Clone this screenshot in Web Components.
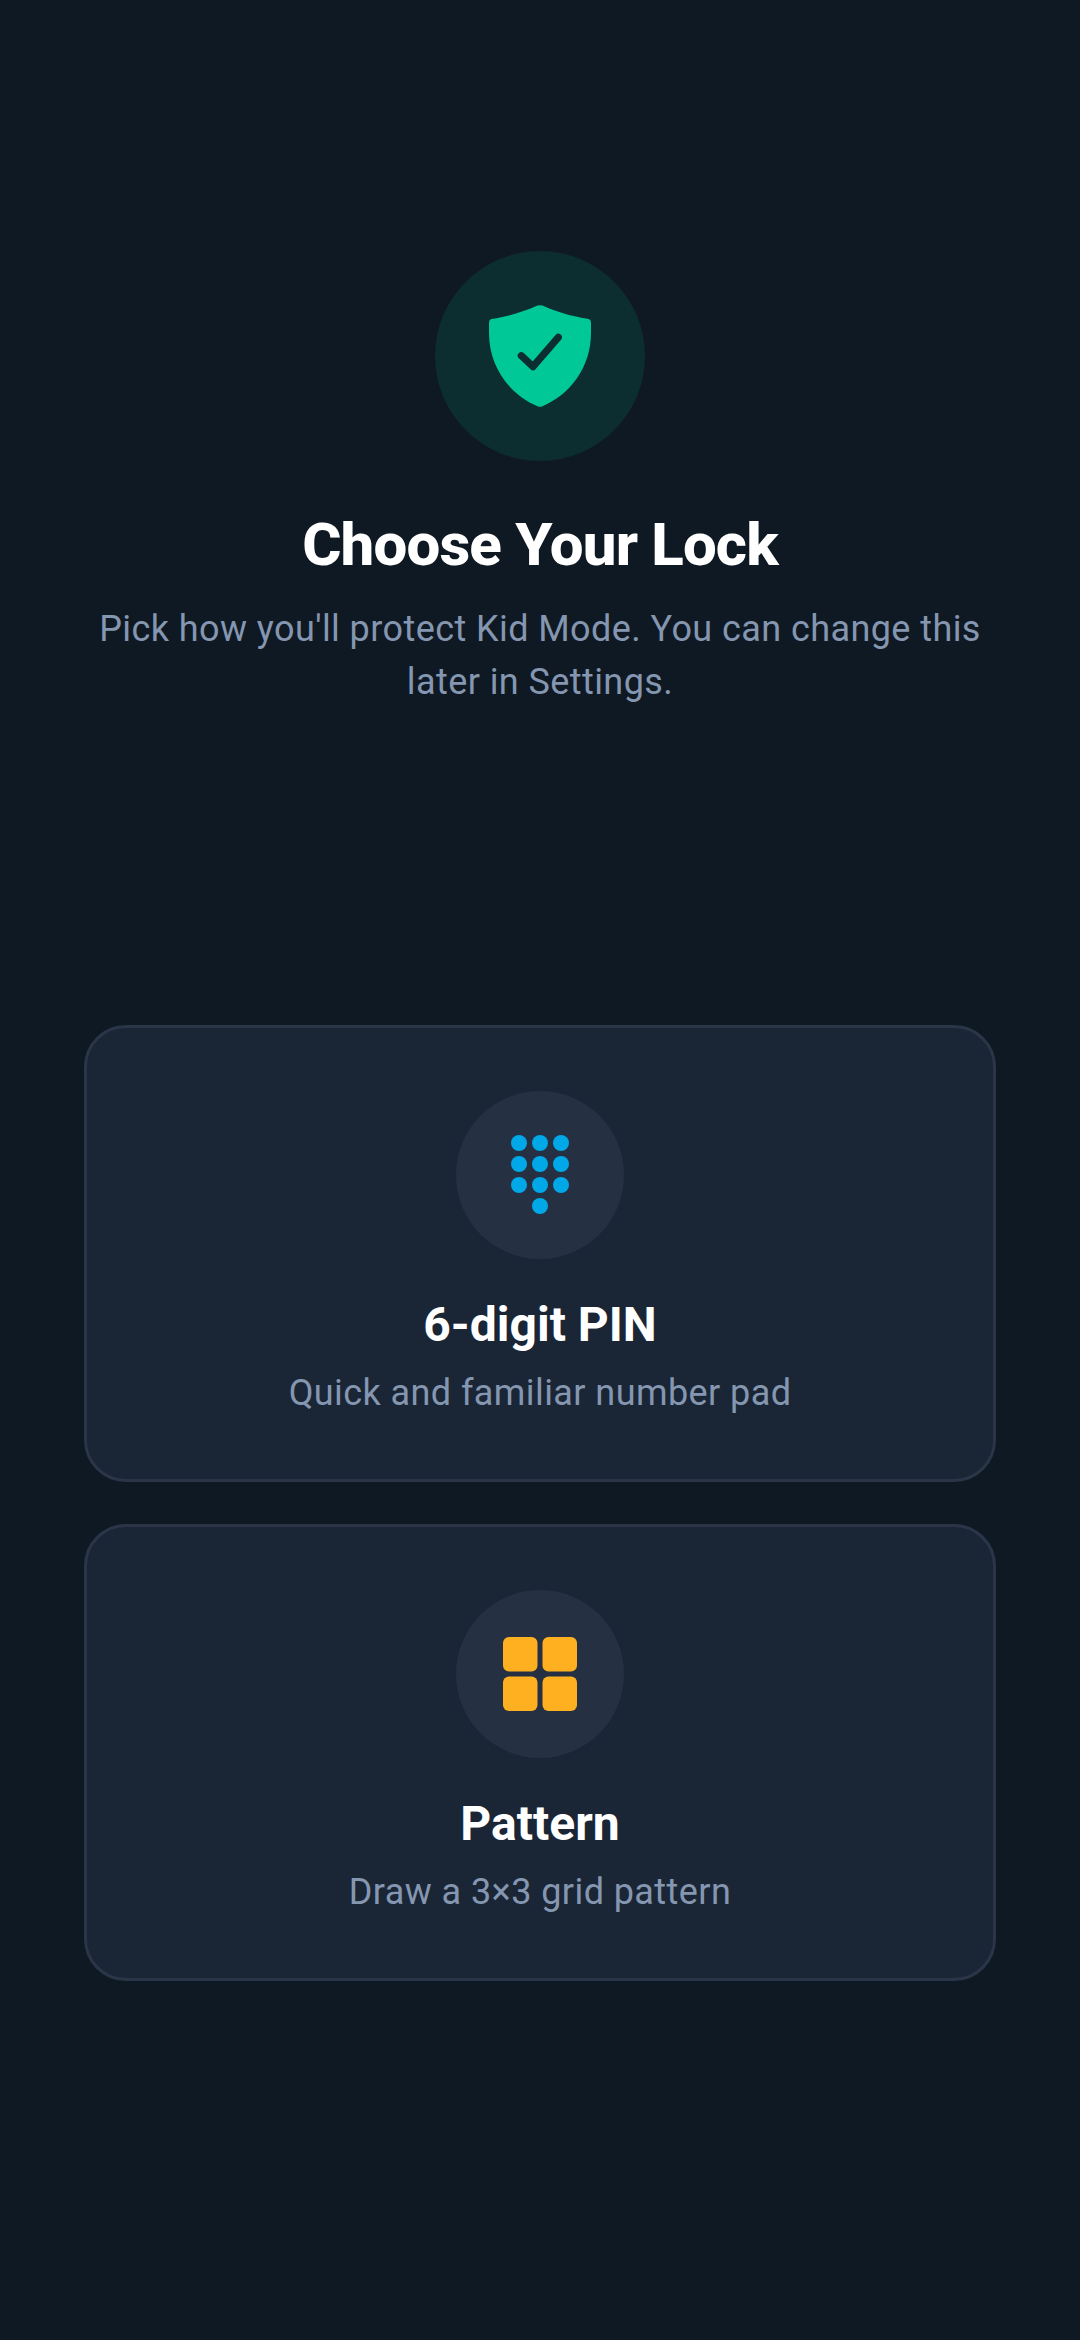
<!DOCTYPE html>
<html>
<head>
<meta charset="utf-8">
<title>Choose Your Lock</title>
<style>
    html, body { margin: 0; height: 100%; background: #0f1923; }
    body { font-family: Roboto, "Noto Sans", sans-serif; }
</style>
</head>
<body>
<lock-screen>
    <lock-hero slot="hero" heading="Choose Your Lock">Pick how you'll protect Kid Mode. You can change this later in Settings.</lock-hero>
    <lock-option heading="6-digit PIN" text="Quick and familiar number pad">
        <svg width="168" height="168" viewBox="0 0 168 168" fill="#00a8e8">
            <circle cx="63" cy="52" r="8"/><circle cx="84" cy="52" r="8"/><circle cx="105" cy="52" r="8"/>
            <circle cx="63" cy="73" r="8"/><circle cx="84" cy="73" r="8"/><circle cx="105" cy="73" r="8"/>
            <circle cx="63" cy="94" r="8"/><circle cx="84" cy="94" r="8"/><circle cx="105" cy="94" r="8"/>
            <circle cx="84" cy="115" r="8"/>
        </svg>
    </lock-option>
    <lock-option heading="Pattern" text="Draw a 3×3 grid pattern">
        <svg width="168" height="168" viewBox="0 0 168 168" fill="#ffb020">
            <rect x="47" y="47" width="34.5" height="34.5" rx="6"/>
            <rect x="86.5" y="47" width="34.5" height="34.5" rx="6"/>
            <rect x="47" y="86.5" width="34.5" height="34.5" rx="6"/>
            <rect x="86.5" y="86.5" width="34.5" height="34.5" rx="6"/>
        </svg>
    </lock-option>
</lock-screen>

<script>
/** Page frame: hero on top, the two lock options further down */
customElements.define('lock-screen', class extends HTMLElement {
    constructor(){super();}
    connectedCallback(){
        const shadow = this.attachShadow({mode: 'open'});
        shadow.innerHTML = `<style>
        :host {
            display: flex;
            flex-direction: column;
            box-sizing: border-box;
            height: 2340px;
            padding: 251px 84px 0;
        }
        .options {
            display: flex;
            flex-direction: column;
            gap: 42px;
            margin-top: 316px;
        }
        </style>
        <slot name="hero"></slot>
        <div class="options"><slot></slot></div>`;
    }
});

/** Shield badge, heading and the intro text (slotted) */
customElements.define('lock-hero', class extends HTMLElement {
    constructor(){super();}
    connectedCallback(){
        const shadow = this.attachShadow({mode: 'open'});
        shadow.innerHTML = `<style>
        :host {
            display: flex;
            flex-direction: column;
            align-items: center;
            text-align: center;
        }
        .badge {
            display: flex;
            align-items: center;
            justify-content: center;
            width: 210px;
            height: 210px;
            border-radius: 50%;
            background: #0d2e30;
        }
        h1 {
            margin: 46px 0 0;
            font-size: 60px;
            line-height: 76px;
            font-weight: 800;
            letter-spacing: -.85px;
            color: #fff;
        }
        p {
            margin: 20px 0 0;
            font-size: 36px;
            letter-spacing: .42px;
            line-height: 53px;
            color: #8596b0;
        }
        </style>
        <div class="badge">
            <svg width="102" height="102" viewBox="0 0 102 102">
                <path fill="#00c896" d="M48.5 .6Q51 -.2 53.5 .6C67 6.5 80 11 99.5 14Q102 14.6 102 18V28C102 62 81 90 53 101.4Q51 102.2 49 101.4C21 90 0 62 0 28V18Q0 14.6 2.5 14C22 11 35 6.5 48.5 .6Z"/>
                <path fill="none" stroke="#0d2e30" stroke-width="7.2" stroke-linecap="round" stroke-linejoin="round" d="M32.3 50.7L44 61.7L69.3 32.3"/>
            </svg>
        </div>
        <h1>${this.getAttribute('heading')}</h1>
        <p><slot></slot></p>`;
    }
});

/** One selectable lock type. The icon comes in through the slot */
customElements.define('lock-option', class extends HTMLElement {
    constructor(){super();}
    connectedCallback(){
        const shadow = this.attachShadow({mode: 'open'});
        shadow.innerHTML = `<style>
        :host {
            display: flex;
            flex-direction: column;
            align-items: center;
            box-sizing: border-box;
            height: 457px;
            padding-top: 63px;
            text-align: center;
            background: #1a2636;
            border: 3px solid #2a3648;
            border-radius: 42px;
        }
        .icon {
            display: block;
            width: 168px;
            height: 168px;
            border-radius: 50%;
            background: #253142;
        }
        h2 {
            margin: 34px 0 0;
            font-size: 48px;
            line-height: 64px;
            font-weight: 700;
            color: #fff;
        }
        p {
            margin: 12px 0 0;
            font-size: 36px;
            letter-spacing: .42px;
            line-height: 48px;
            color: #8596b0;
        }
        ::slotted(svg) { display: block; }
        </style>
        <div class="icon"><slot></slot></div>
        <h2>${this.getAttribute('heading')}</h2>
        <p>${this.getAttribute('text')}</p>`;
    }
});
</script>
</body>
</html>
